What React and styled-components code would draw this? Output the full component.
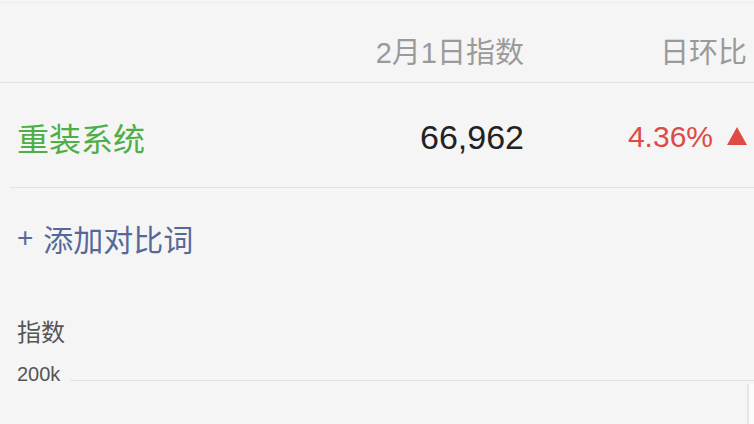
import React from "react";
import styled, { createGlobalStyle } from "styled-components";

const GlobalStyle = createGlobalStyle`
	html, body {
		margin: 0;
		padding: 0;
		background: #f5f5f5;
		font-family: "Liberation Sans", "Noto Sans CJK SC", sans-serif;
	}
	#root {
		width: 754px;
		height: 424px;
		overflow: hidden;
	}
`;

const Page = styled.div`
	width: 754px;
	height: 424px;
	background: #f5f5f5;
	padding-top: 2px;
	box-sizing: border-box;
`;

const Grid = styled.div`
	display: grid;
	grid-template-columns: 1fr 210px 223px;
	align-items: center;
	box-sizing: border-box;
	height: ${(props) => props.height}px;
	margin-left: ${(props) => props.inset || 0}px;
	padding-left: ${(props) => 17 - (props.inset || 0)}px;
	padding-right: 7px;
	padding-top: ${(props) => props.shift || 0}px;
	border-top: ${(props) => (props.top ? "1px solid #ececec" : "none")};
	border-bottom: 1px solid #e3e3e3;
`;

const Cell = styled.div`
	font-size: ${(props) => props.size}px;
	color: ${(props) => props.color};
	white-space: nowrap;
	display: flex;
	align-items: center;
	justify-content: ${(props) => (props.left ? "flex-start" : "flex-end")};
`;

const Triangle = styled.span`
	display: inline-block;
	width: 0;
	height: 0;
	margin-left: 14px;
	border-left: 10px solid transparent;
	border-right: 10px solid transparent;
	border-bottom: 18px solid #df4a46;
	margin-top: -2px;
`;

const AddRow = styled.div`
	height: 104px;
	padding-left: 17px;
	display: flex;
	align-items: center;
	font-size: 30px;
	color: #56689a;
	padding-bottom: 4px;
	box-sizing: border-box;
`;

const Plus = styled.span`
	margin-right: 10px;
	font-size: 28px;
`;

const ChartTitle = styled.div`
	padding-left: 17px;
	font-size: 24px;
	color: #555;
	height: 34px;
	line-height: 34px;
	margin-top: 24px;
`;

const AxisRow = styled.div`
	display: flex;
	align-items: flex-end;
	padding-left: 17px;
	margin-top: 14px;
`;

const AxisLabel = styled.span`
	font-size: 20px;
	color: #555;
	width: 53px;
	line-height: 20px;
`;

const GridLine = styled.div`
	flex: 1;
	border-bottom: 1px solid #e2e2e2;
	margin-bottom: 3px;
`;

const Plot = styled.div`
	margin-left: 70px;
	height: 60px;
	display: flex;
	justify-content: flex-end;
`;

const Edge = styled.div`
	width: 5px;
	border-left: 2px solid #e6e6e6;
	background: #fbfbfb;
`;

export default function App() {
	return (
		<>
			<GlobalStyle />
			<Page>
				<Grid height={81} top shift={14}>
					<Cell left size={29} color="#999" />
					<Cell size={29} color="#9a9a9a">2月1日指数</Cell>
					<Cell size={29} color="#9a9a9a">日环比</Cell>
				</Grid>
				<Grid height={105} inset={10} shift={4}>
					<Cell left size={32} color="#4fae45">重装系统</Cell>
					<Cell size={34} color="#222">66,962</Cell>
					<Cell size={30} color="#df4a46">
						4.36%
						<Triangle />
					</Cell>
				</Grid>
				<AddRow>
					<Plus>+</Plus>添加对比词
				</AddRow>
				<ChartTitle>指数</ChartTitle>
				<AxisRow>
					<AxisLabel>200k</AxisLabel>
					<GridLine />
				</AxisRow>
				<Plot>
					<Edge />
				</Plot>
			</Page>
		</>
	);
}
